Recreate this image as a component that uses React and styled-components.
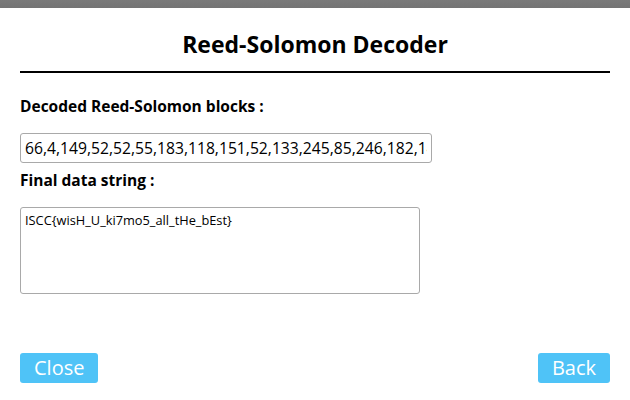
import React from 'react'
import styled, { createGlobalStyle } from 'styled-components'

const GlobalStyle = createGlobalStyle`
  html, body {
    margin: 0;
    padding: 0;
    background: #fff;
    font-family: "Open Sans", "Noto Sans", sans-serif;
  }
`

const Frame = styled.div`
  width: 630px;
  height: 400px;
  display: flex;
  flex-direction: column;
  overflow: hidden;
`

const TopBar = styled.div`
  height: 8px;
  flex: 0 0 auto;
  background: linear-gradient(#7a7a7a, #747474);
`

const Body = styled.div`
  flex: 1 1 auto;
  display: flex;
  flex-direction: column;
  align-items: flex-start;
  padding: 0 20px;
`

const Title = styled.h1`
  align-self: stretch;
  margin: 0;
  padding: 21px 0 12px;
  font-size: 23px;
  font-weight: 700;
  line-height: 30px;
  color: #000;
  text-align: center;
  border-bottom: 2px solid #000;
`

const Label = styled.div`
  margin-top: ${props => props.$gap}px;
  font-size: 15.5px;
  font-weight: 700;
  line-height: 20px;
  color: #000;
`

const Field = styled.input`
  box-sizing: border-box;
  width: 412px;
  height: 30px;
  margin: 17px 0 0;
  padding: 0 4px;
  border: 1px solid #a9a9a9;
  border-radius: 3px;
  font-family: "Open Sans", "Noto Sans", sans-serif;
  font-size: 15.7px;
  color: #000;
  outline: none;
`

const DataArea = styled.textarea`
  box-sizing: border-box;
  width: 400px;
  height: 87px;
  margin: 17px 0 0;
  padding: 3px 4px;
  border: 1px solid #a9a9a9;
  border-radius: 3px;
  font-family: "Open Sans", "Noto Sans", sans-serif;
  font-size: 12.8px;
  color: #000;
  resize: none;
  outline: none;
`

const Footer = styled.div`
  align-self: stretch;
  display: flex;
  justify-content: space-between;
  margin-top: 59px;
`

const ActionButton = styled.button`
  height: 30px;
  padding: 0 14px;
  border: none;
  border-radius: 3px;
  background: #4fc3f7;
  color: #fff;
  font-family: "Open Sans", "Noto Sans", sans-serif;
  font-size: 20px;
  line-height: 30px;
  cursor: pointer;
`

/**
 * @description - Reed-Solomon decoder dialog
 */
function App () {
  return (
    <>
      <GlobalStyle />
      <Frame>
        <TopBar />
        <Body>
          <Title>Reed-Solomon Decoder</Title>
          <Label $gap={23}>Decoded Reed-Solomon blocks :</Label>
          <Field
            readOnly
            value="66,4,149,52,52,55,183,118,151,52,133,245,85,246,182,142,51,119"
          />
          <Label $gap={7}>Final data string :</Label>
          <DataArea readOnly value="ISCC{wisH_U_ki7mo5_all_tHe_bEst}" />
          <Footer>
            <ActionButton>Close</ActionButton>
            <ActionButton>Back</ActionButton>
          </Footer>
        </Body>
      </Frame>
    </>
  )
}

export default App
